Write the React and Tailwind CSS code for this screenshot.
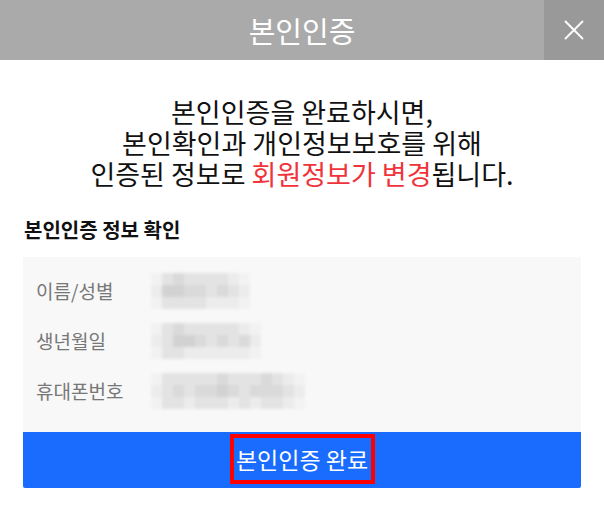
import { X } from "lucide-react";

const font = { fontFamily: '"Noto Sans CJK KR", "Noto Sans", sans-serif' };

// 모자이크 처리된 값 (가려진 개인정보)
const Mosaic = ({ cols }) => (
  <div className="flex flex-col blur-[1.5px]">
    {[0, 1, 2].map((r) => (
      <div key={r} className="flex">
        {cols.map((c, i) => (
          <div key={i} className={`w-[11px] h-[12px] ${c[r]}`} />
        ))}
      </div>
    ))}
  </div>
);

const g0 = "bg-[#f2f2f2]";
const g1 = "bg-[#dadada]";
const g2 = "bg-[#e3e3e3]";
const g3 = "bg-[#ececec]";
const g4 = "bg-[#d2d2d2]";

const rows = [
  { label: "이름/성별", cols: [[g0, g3, g0], [g2, g4, g2], [g1, g4, g2], [g2, g1, g2], [g2, g1, g2], [g2, g2, g3], [g2, g1, g3], [g3, g2, g3], [g0, g3, g0]] },
  { label: "생년월일", cols: [[g0, g3, g0], [g2, g2, g2], [g1, g4, g2], [g2, g4, g3], [g2, g1, g3], [g2, g2, g3], [g2, g1, g3], [g2, g2, g3], [g3, g1, g3], [g0, g3, g0]] },
  { label: "휴대폰번호", cols: [[g0, g3, g0], [g2, g2, g2], [g2, g1, g2], [g2, g2, g3], [g2, g1, g2], [g2, g1, g2], [g1, g4, g2], [g2, g1, g3], [g2, g2, g2], [g2, g1, g3], [g1, g1, g2], [g2, g1, g2], [g3, g2, g3], [g0, g3, g0]] },
];

export default function App() {
  return (
    <div className="w-[604px] h-[522px] bg-white" style={font}>
      {/* 헤더 */}
      <div className="flex h-[60px] bg-[#aaaaaa]">
        <div className="flex-1 flex items-center justify-center pl-[60px]">
          <span className="text-white text-[29px] leading-none">본인인증</span>
        </div>
        <button className="w-[60px] h-[60px] bg-[#999999] flex items-center justify-center">
          <X size={34} strokeWidth={1.3} className="text-white" />
        </button>
      </div>

      {/* 안내 문구 */}
      <div className="pt-[36px] text-center text-[27px] leading-[31px] text-[#111]">
        <p>본인인증을 완료하시면,</p>
        <p>본인확인과 개인정보보호를 위해</p>
        <p>
          인증된 정보로 <span className="text-[#f0333b]">회원정보가 변경</span>됩니다.
        </p>
      </div>

      <div className="px-[23px] pt-[28px]">
        <h3 className="text-[20px] leading-[26px] font-bold text-[#111] pl-[1px]">본인인증 정보 확인</h3>

        <div className="mt-[14px] bg-[#f8f8f8] rounded-t-[2px] pt-[20px] pb-[27px] px-[13px] flex flex-col gap-[22px]">
          {rows.map((r) => (
            <div key={r.label} className="flex items-center h-[28px]">
              <span className="w-[115px] text-[19px] text-[#777]">{r.label}</span>
              <Mosaic cols={r.cols} />
            </div>
          ))}
        </div>

        <button className="w-full h-[56px] bg-[#1a6cff] rounded-b-[2px] flex items-start justify-center">
          <span className="border-[4px] border-[#ff0000] w-[145px] h-[50px] mt-[2px] flex items-center justify-center text-white text-[23px]">
            본인인증 완료
          </span>
        </button>
      </div>
    </div>
  );
}
